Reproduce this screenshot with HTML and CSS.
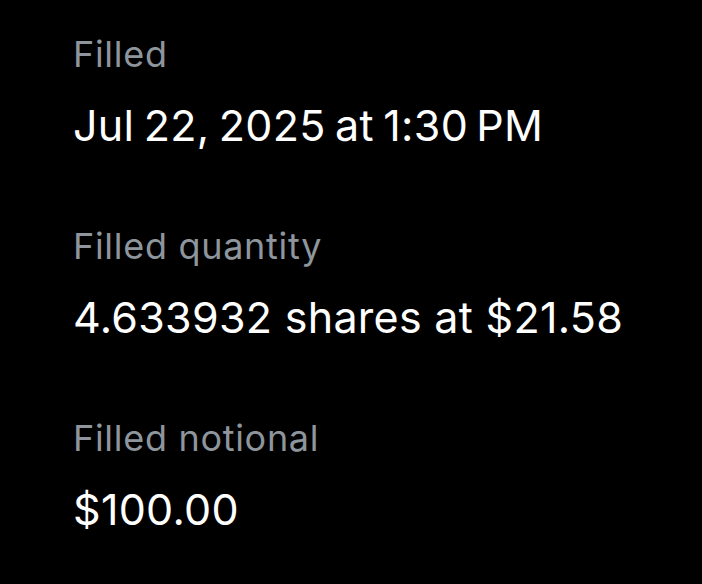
FILE: index.html
```html
<!DOCTYPE html>
<html lang="en">
  <head>
    <meta charset="UTF-8" />
    <meta name="viewport" content="width=device-width, initial-scale=1.0" />
    <title>Order Details</title>

    <link rel="stylesheet" href="styles.css">
  </head>

  <body>
    <div class="details">
      <div class="detail">
        <div class="detail-label">Filled</div>
        <div class="detail-value detail-date">Jul 22, 2025 at 1:30&#8239;PM</div>
      </div>
      <div class="detail">
        <div class="detail-label">Filled quantity</div>
        <div class="detail-value">4.633932 shares at $21.58</div>
      </div>
      <div class="detail">
        <div class="detail-label">Filled notional</div>
        <div class="detail-value">$100.00</div>
      </div>
    </div>
  </body>
</html>
```

FILE: styles.css
```css
body {
  font-family: Inter, "Noto Sans", sans-serif;
  margin: 0;
  padding: 0;
  background-color: #000;
  color: #fff;
}

.details {
  display: flex;
  flex-direction: column;
  gap: 73px;
  padding: 32px 0 0 73px;
}

.detail {
  display: flex;
  flex-direction: column;
  gap: 23px;
}

.detail-label {
  font-size: 36px;
  line-height: 44px;
  letter-spacing: 0.7px;
  color: #8e959c;
}

.detail-value {
  font-size: 43px;
  line-height: 52px;
  letter-spacing: 0.3px;
  color: #fff;
}

/* iOS style date: tighter spaces */
.detail-date {
  word-spacing: -3px;
}
```
